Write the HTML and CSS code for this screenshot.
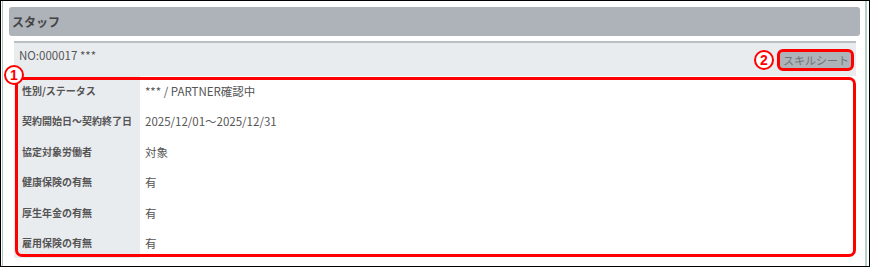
FILE: index.html
```html
<!DOCTYPE html>
<html lang="ja">
<head>
<meta charset="utf-8">
<link rel="stylesheet" href="styles.css">
</head>
<body>
<div class="frame">
  <div class="inner">
    <div class="page-header">スタッフ</div>
    <div class="section">
      <div class="section-head">
        <div class="staff-no">NO:000017 ***</div>
        <div class="btn-wrap">
          <span class="mark mark-2">2</span>
          <span class="btn">スキルシート</span>
        </div>
      </div>
      <div class="table-wrap">
        <span class="mark mark-1">1</span>
        <div class="table">
          <div class="row"><div class="label">性別/ステータス</div><div class="value">*** / PARTNER確認中</div></div>
          <div class="row"><div class="label">契約開始日～契約終了日</div><div class="value">2025/12/01～2025/12/31</div></div>
          <div class="row"><div class="label">協定対象労働者</div><div class="value">対象</div></div>
          <div class="row"><div class="label">健康保険の有無</div><div class="value">有</div></div>
          <div class="row"><div class="label">厚生年金の有無</div><div class="value">有</div></div>
          <div class="row"><div class="label">雇用保険の有無</div><div class="value">有</div></div>
        </div>
        <div class="highlight"></div>
      </div>
    </div>
  </div>
</div>
</body>
</html>
```
FILE: styles.css
```css
* { box-sizing: border-box; }
html, body { margin: 0; padding: 0; background: #fff; }
body { font-family: "Noto Sans CJK JP", "Noto Sans", sans-serif; color: #555; }

.frame {
  width: 870px;
  height: 267px;
  border: 1px solid #000;
  padding: 0 2px 0 1px;
  overflow: hidden;
}
.inner {
  height: 100%;
  border-left: 1px solid #a9cabd;
  border-right: 2px solid #b3d1c4;
  padding: 6px 5px 0 6px;
  background: #fff;
}
.page-header {
  height: 29px;
  background: #adb3b9;
  border-radius: 3px;
  padding-left: 3px;
  font-size: 12px;
  font-weight: bold;
  color: #444;
  line-height: 29px;
}
.section {
  margin: 5px 4px 0 5px;
  border-top: 2px solid #b9bfc5;
}
.section-head {
  background: #e9ecef;
  display: flex;
  justify-content: space-between;
  align-items: flex-start;
  padding: 4px 4px 8px 5px;
}
.staff-no {
  font-size: 11.5px;
  line-height: 16px;
  color: #555;
}
.btn-wrap {
  position: relative;
  margin-top: 5px;
}
.btn {
  display: block;
  height: 16px;
  width: 72px;
  background: #adb3b9;
  color: #6c737a;
  font-size: 11px;
  line-height: 16px;
  text-align: center;
  border-radius: 2px;
}
.btn-wrap::after {
  content: "";
  position: absolute;
  top: -3px; left: -3px; right: -2px; bottom: -3px;
  border: 3px solid #f00;
  border-radius: 6px;
}
.mark {
  position: absolute;
  width: 20px;
  height: 20px;
  border: 2px solid #f00;
  border-radius: 50%;
  background: #fff;
  color: #f00;
  font-family: "Liberation Sans", sans-serif;
  font-weight: bold;
  font-size: 14px;
  line-height: 16px;
  text-align: center;
  z-index: 2;
}
.mark-2 { left: -26px; top: -2px; }
.mark-1 { left: -10px; top: -11px; }

.table-wrap { position: relative; }
.row {
  display: flex;
  height: 30.4px;
}
.label {
  width: 126px;
  background: #e9ecef;
  padding-left: 8px;
  font-size: 10px;
  font-weight: bold;
  line-height: 30px;
  color: #555;
}
.value {
  flex: 1;
  padding-left: 5px;
  font-size: 11.5px;
  line-height: 30px;
  color: #555;
}
.highlight {
  position: absolute;
  top: 1px; left: 1px; right: 0; bottom: 1px;
  border: 3px solid #f00;
  border-radius: 7px;
}
```
